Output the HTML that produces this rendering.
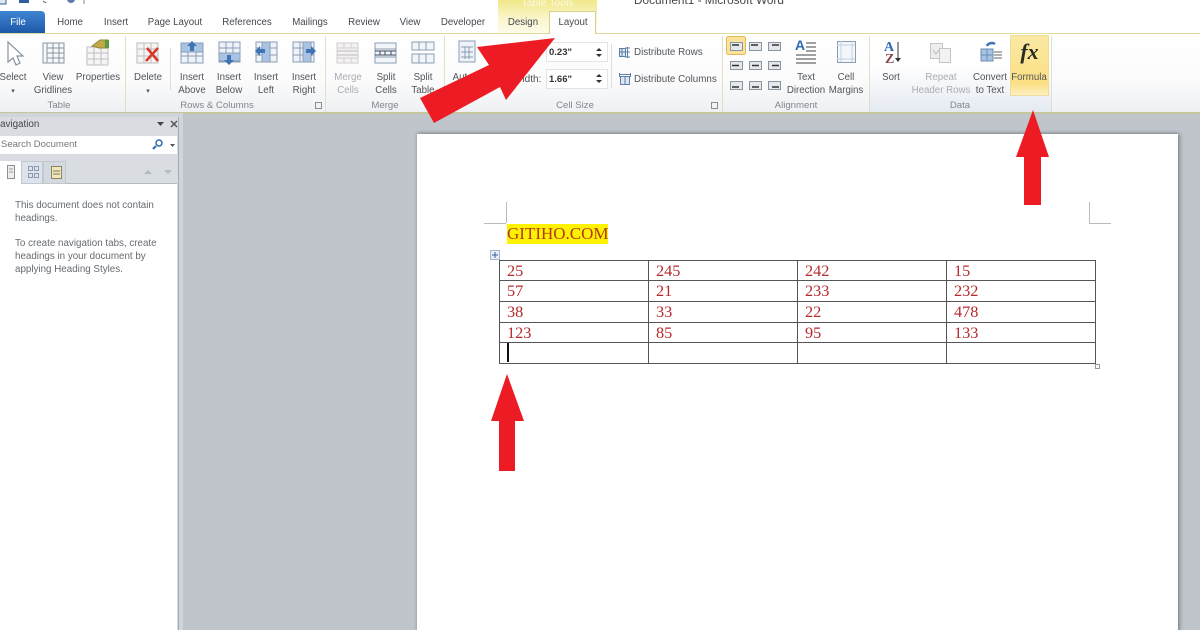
<!DOCTYPE html>
<html><head><meta charset="utf-8"><style>
html,body{margin:0;padding:0;width:1200px;height:630px;overflow:hidden;background:#c0c5cb}
body{font-family:"Liberation Sans",sans-serif}
#w{position:relative;width:1200px;height:630px;overflow:hidden;filter:blur(.35px)}
.a{position:absolute}
.t{position:absolute;font-size:9.7px;line-height:13px;color:#50555b;text-align:center;white-space:nowrap;transform:translateX(-50%)}
.g{color:#a8acb2}
.tab{position:absolute;top:17px;font-size:9.7px;color:#44494f;white-space:nowrap;transform:translateX(-50%)}
.lab{position:absolute;top:100px;font-size:9.6px;color:#82878d;white-space:nowrap;transform:translateX(-50%)}
.sep{position:absolute;top:36px;width:1px;height:76px;background:#dfe0c8}
.n{position:absolute;font-family:"Liberation Serif",serif;font-size:16.3px;color:#b52a2e;line-height:18px}
.l{position:absolute;background:#555}
.nv{position:absolute;font-size:9.8px;color:#666b70;white-space:nowrap}
</style></head><body><div id="w">
<!-- top -->
<div class="a" style="left:0;top:0;width:1200px;height:34px;background:#fff"></div>
<svg class="a" style="left:0;top:0" width="100" height="8"><rect x="-3" y="-6" width="9" height="10" fill="#dde6f2" stroke="#3a5f95"/><rect x="19" y="-4" width="10" height="7" fill="#2d5d9e"/><path d="M43 1l3 2" stroke="#557"/><circle cx="71" cy="-1" r="4" fill="#5a7bb0"/><path d="M84 -2v6" stroke="#888"/></svg>
<div class="a" style="left:0;top:11px;width:45px;height:22px;background:linear-gradient(#3f86d2,#1d58a8);border-radius:0 4px 0 0"></div>
<div class="a" style="left:0;top:17px;width:36px;text-align:center;font-size:9.7px;color:#fff">File</div>
<div class="tab" style="left:70px">Home</div>
<div class="tab" style="left:116px">Insert</div>
<div class="tab" style="left:175px">Page Layout</div>
<div class="tab" style="left:247px">References</div>
<div class="tab" style="left:310px">Mailings</div>
<div class="tab" style="left:364px">Review</div>
<div class="tab" style="left:410px">View</div>
<div class="tab" style="left:463px">Developer</div>
<div class="a" style="left:498px;top:0;width:99px;height:33px;background:linear-gradient(#f1e88a,#faf6cf 60%,#fdfbe8)"></div>
<div class="a" style="left:498px;top:-3px;width:99px;text-align:center;font-size:10.5px;color:#fbf9e6">Table Tools</div>
<div class="tab" style="left:523px">Design</div>
<div class="a" style="left:549px;top:11px;width:47px;height:23px;background:#fff;border:1px solid #d5d28c;border-bottom:none;box-sizing:border-box"></div>
<div class="tab" style="left:573px">Layout</div>
<div class="a" style="left:634px;top:-7px;font-size:11.8px;color:#44484d;white-space:nowrap">Document1 - Microsoft Word</div>
<div class="a" style="left:0;top:33px;width:549px;height:1px;background:#dedca0"></div>
<div class="a" style="left:596px;top:33px;width:604px;height:1px;background:#dedca0"></div>
<!-- ribbon -->
<div class="a" style="left:0;top:34px;width:1200px;height:78px;background:linear-gradient(#fff,#fbfbfb 60%,#eef0f3)"></div>
<div class="a" style="left:870px;top:34px;width:181px;height:78px;background:linear-gradient(#fff 40%,#e5eaf2)"></div>
<div class="a" style="left:0;top:112px;width:1200px;height:1.5px;background:#c6c69c"></div>
<div class="sep" style="left:125px"></div><div class="sep" style="left:325px"></div><div class="sep" style="left:444px"></div><div class="sep" style="left:722px"></div><div class="sep" style="left:869px"></div><div class="sep" style="left:1051px"></div>
<div class="a" style="left:170px;top:48px;width:1px;height:42px;background:#ddd"></div>
<div class="a" style="left:611px;top:44px;width:1px;height:44px;background:#ddd"></div>

<svg class="a" style="left:0;top:34px" width="1200" height="60" fill="none" stroke-width="1">
<!-- select -->
<path d="M8 8v20l5-4 3 7 4-2-3-7h6z" fill="#fff" stroke="#8a94a0" stroke-width="1.2"/>
<!-- gridlines -->
<g stroke="#8a95a0"><rect x="43" y="9" width="21" height="20" fill="#f6f8fa"/><path d="M47 14h17M47 19h17M47 24h17M47 9v20M53 9v20M59 9v20"/></g>
<!-- properties -->
<g stroke="#bcc1c8"><rect x="87" y="13" width="21" height="18" fill="#f8f4f2"/><path d="M87 19h21M87 25h21M94 13v18M101 13v18"/></g><path d="M92 12l8-6h8v8h-9z" fill="#c2a844" stroke="#8f8a3a"/><rect x="105" y="6" width="4" height="8" fill="#5f9a40"/>
<!-- delete -->
<g stroke="#bcbcbe"><rect x="137" y="9" width="21" height="20" fill="#f7f3f1"/><path d="M137 15h21M137 22h21M144 9v20M151 9v20"/></g><path d="M147 14l11 13M158 14l-12 13" stroke="#d8392c" stroke-width="2.6"/>
<!-- insert -->
<g stroke="#8a9db3"><rect x="181" y="9" width="22" height="20" fill="#eef3f9"/><path d="M181 15h22M181 22h22M188 9v20M196 9v20"/><rect x="181" y="9" width="22" height="9" fill="#a9c3e4"/></g><path d="M192 7l5 5h-3v5h-4v-5h-3z" fill="#3f74b5"/>
<g stroke="#8a9db3"><rect x="219" y="8" width="21" height="20" fill="#eef3f9"/><path d="M219 14h21M219 21h21M226 8v20M233 8v20"/><rect x="219" y="19" width="21" height="8" fill="#a9c3e4"/></g><path d="M229 31l5-5h-3v-5h-4v5h-3z" fill="#3f74b5"/>
<g stroke="#8a9db3"><rect x="256" y="8" width="21" height="20" fill="#eef3f9"/><path d="M256 14h21M256 21h21M263 8v20M270 8v20"/><rect x="262" y="8" width="8" height="20" fill="#a9c3e4"/></g><path d="M255 17l5-5v3h5v4h-5v3z" fill="#3f74b5"/>
<g stroke="#8a9db3"><rect x="293" y="8" width="21" height="20" fill="#eef3f9"/><path d="M293 14h21M293 21h21M300 8v20M307 8v20"/><rect x="303" y="8" width="8" height="20" fill="#a9c3e4"/></g><path d="M316 17l-5-5v3h-5v4h5v3z" fill="#3f74b5"/>
<!-- merge -->
<g stroke="#cfcfd2"><rect x="337" y="9" width="21" height="20" fill="#f5f1f1"/><path d="M337 14h21M337 24h21M344 9v5M351 9v5M344 24v5M351 24v5"/></g><path d="M337 17h21M337 21h21" stroke="#bbb"/>
<!-- split cells -->
<g stroke="#8a9db3"><rect x="375" y="9" width="21" height="20" fill="#f2f6fa"/><path d="M375 15h21M375 23h21"/></g><path d="M375 17h21M375 21h21M380 17v4M385 17v4M391 17v4" stroke="#3d4b5c"/>
<!-- split table -->
<g stroke="#8a9db3"><rect x="412" y="8" width="22" height="8" fill="#f2f6fa"/><rect x="412" y="20" width="22" height="9" fill="#f2f6fa"/><path d="M419 8v8M426 8v8M419 20v9M426 20v9"/></g>
<!-- autofit -->
<g stroke="#8a9db3"><rect x="459" y="7" width="16" height="21" fill="#eef3f9"/><path d="M461 13h12M461 18h12M461 23h12M465 13v12M469 13v12"/></g>
</svg>

<svg class="a" style="left:0;top:0" width="1200" height="112" fill="none">
<!-- dist -->
<g stroke="#5d7ea6"><rect x="619.500" y="48.500" width="6" height="8" fill="#dbe6f2"/><path d="M622 48v8M619 52h6M627.500 47v11M625 48h5M625 52h5M625 57h5"/><rect x="620.500" y="76.500" width="9" height="8" fill="#dbe6f2"/><path d="M619 74.500h12M619.500 73v4M630.500 73v4M625 76v9"/></g>
<!-- align highlight -->
<rect x="726.500" y="36.500" width="19" height="18" rx="2" fill="#fbe39a" stroke="#dfb85a"/>
<g fill="#e4e8ec" stroke="#8a95a0">
<rect x="730.500" y="42.500" width="12" height="8"/><rect x="749.500" y="42.500" width="12" height="8"/><rect x="768.500" y="42.500" width="12" height="8"/>
<rect x="730.500" y="61.500" width="12" height="8"/><rect x="749.500" y="61.500" width="12" height="8"/><rect x="768.500" y="61.500" width="12" height="8"/>
<rect x="730.500" y="81.500" width="12" height="8"/><rect x="749.500" y="81.500" width="12" height="8"/><rect x="768.500" y="81.500" width="12" height="8"/>
</g>
<path d="M732 45h7M751 45h7M772 45h7M732 65.500h7M752 65.500h7M772 65.500h7M732 87h7M752 87h7M772 87h7" stroke="#333" stroke-width="1.5"/>
<!-- text direction -->
<text x="795" y="50" font-family="Liberation Sans" font-weight="bold" font-size="14" fill="#2d6ab0">A</text>
<path d="M806 43h10M806 47h10M806 51h10M796 55h20M796 59h20M796 63h20" stroke="#444"/>
<!-- margins -->
<rect x="837.500" y="41.500" width="18" height="21" fill="#f3f6fa" stroke="#8a9db3"/><path d="M841 41v21M852 41v21M837 45h18M837 59h18" stroke="#c5d0dd"/>
<!-- sort -->
<text x="884" y="51" font-family="Liberation Serif" font-weight="bold" font-size="14" fill="#2d6ab0">A</text>
<text x="885" y="63" font-family="Liberation Serif" font-weight="bold" font-size="14" fill="#8b4a4a">Z</text>
<path d="M898 42v18" stroke="#333"/><path d="M895 58h6l-3 4z" fill="#333"/>
<!-- repeat -->
<rect x="930.500" y="43.500" width="12" height="15" fill="#eee" stroke="#c5c5c5"/><rect x="939.500" y="48.500" width="11" height="14" fill="#f2f2f2" stroke="#c5c5c5"/><path d="M933 50l3 4 3-4" stroke="#bbb"/>
<!-- convert -->
<rect x="981" y="49" width="12" height="12" fill="#a8c3e2" stroke="#6b8cb3"/><path d="M987 49v12M981 55h12" stroke="#6b8cb3"/><path d="M994 52h8M994 55h8M994 58h8" stroke="#666"/><path d="M987 46a5 4 0 0 1 8-2" stroke="#3f74b5" stroke-width="2.5"/>
</svg>

<!-- formula button -->
<div class="a" style="left:1010px;top:35px;width:39px;height:61px;background:linear-gradient(#fbe9a4,#fbdf83 80%,#fdf0c0);border:1px solid #eedc9c;box-sizing:border-box"></div>
<div class="a" style="left:1010px;top:39px;width:39px;text-align:center;font-family:'Liberation Serif',serif;font-style:italic;font-weight:bold;font-size:22px;color:#2b2b22">fx</div>

<!-- field boxes -->
<div class="a" style="left:546px;top:42px;width:62px;height:20px;background:#fff;border:1px solid #e2e4e8;box-sizing:border-box"></div>
<div class="a" style="left:546px;top:69px;width:62px;height:20px;background:#fff;border:1px solid #e2e4e8;box-sizing:border-box"></div>
<svg class="a" style="left:590px;top:44px" width="20" height="44"><path d="M6 7l3-3 3 3zM6 10l3 3 3-3zM6 33l3-3 3 3zM6 36l3 3 3-3z" fill="#333"/></svg>
<div class="a" style="left:549px;top:47px;font-size:9.5px;font-weight:bold;color:#333">0.23"</div>
<div class="a" style="left:549px;top:74px;font-size:9.5px;font-weight:bold;color:#333">1.66"</div>
<div class="a" style="left:513px;top:74px;font-size:10px;color:#4a4f55">Width:</div>
<div class="a" style="left:634px;top:47px;font-size:9.8px;color:#50555b;white-space:nowrap">Distribute Rows</div>
<div class="a" style="left:634px;top:74px;font-size:9.8px;color:#50555b;white-space:nowrap">Distribute Columns</div>

<!-- button labels -->
<div class="t" style="left:13px;top:71px">Select<br><span style="font-size:7px">▾</span></div>
<div class="t" style="left:53px;top:71px">View<br>Gridlines</div>
<div class="t" style="left:98px;top:71px">Properties</div>
<div class="t" style="left:148px;top:71px">Delete<br><span style="font-size:7px">▾</span></div>
<div class="t" style="left:192px;top:71px">Insert<br>Above</div>
<div class="t" style="left:229px;top:71px">Insert<br>Below</div>
<div class="t" style="left:266px;top:71px">Insert<br>Left</div>
<div class="t" style="left:304px;top:71px">Insert<br>Right</div>
<div class="t g" style="left:348px;top:71px">Merge<br>Cells</div>
<div class="t" style="left:386px;top:71px">Split<br>Cells</div>
<div class="t" style="left:423px;top:71px">Split<br>Table</div>
<div class="t" style="left:468px;top:71px">AutoFit</div>
<div class="t" style="left:806px;top:71px">Text<br>Direction</div>
<div class="t" style="left:846px;top:71px">Cell<br>Margins</div>
<div class="t" style="left:891px;top:71px">Sort</div>
<div class="t g" style="left:941px;top:71px">Repeat<br>Header Rows</div>
<div class="t" style="left:990px;top:71px">Convert<br>to Text</div>
<div class="t" style="left:1029px;top:71px">Formula</div>
<div class="lab" style="left:59px">Table</div>
<div class="lab" style="left:217px">Rows &amp; Columns</div>
<div class="lab" style="left:385px">Merge</div>
<div class="lab" style="left:575px">Cell Size</div>
<div class="lab" style="left:796px">Alignment</div>
<div class="lab" style="left:960px">Data</div>
<svg class="a" style="left:0;top:0" width="730" height="112" fill="none" stroke="#8a8f95"><path d="M315.500 102.500h6v6h-6zM711.500 102.500h6v6h-6z"/></svg>

<!-- nav pane -->
<div class="a" style="left:0;top:113px;width:183px;height:517px;background:#d0d5db"></div>
<div class="a" style="left:0;top:117px;width:178px;height:513px;background:#d9dde2;border-right:1px solid #a5abb2"></div>
<div class="nv" style="left:-7px;top:119px;color:#444">Navigation</div>
<svg class="a" style="left:155px;top:119px" width="25" height="10"><path d="M2 3h7l-3.5 4z" fill="#444"/><path d="M16 2l6 6M22 2l-6 6" stroke="#555" stroke-width="1.5"/></svg>
<div class="a" style="left:0;top:136px;width:177px;height:18px;background:#fff"></div>
<div class="nv" style="left:1px;top:139px;color:#777;font-size:9.5px">Search Document</div>
<svg class="a" style="left:150px;top:138px" width="28" height="14" fill="none"><circle cx="9" cy="5" r="3" stroke="#2d6ab0" stroke-width="1.5"/><path d="M6 8l-3 3" stroke="#2d6ab0" stroke-width="2"/><path d="M20 6h5l-2.5 3z" fill="#555"/></svg>
<div class="a" style="left:0;top:183px;width:177px;height:447px;background:#fff"></div>
<div class="a" style="left:0;top:183px;width:177px;height:1px;background:#b5bac0"></div>
<div class="a" style="left:21px;top:161px;width:22px;height:23px;background:#dde3ec;border:1px solid #c3c8cf;box-sizing:border-box"></div>
<div class="a" style="left:43px;top:161px;width:23px;height:23px;background:#d4d9df;border:1px solid #c3c8cf;box-sizing:border-box"></div>
<div class="a" style="left:0;top:161px;width:21px;height:24px;background:#fff"></div>
<svg class="a" style="left:0;top:163px" width="180" height="20" fill="none"><rect x="7.500" y="2.500" width="7" height="13" fill="#eee" stroke="#8b8f95"/><path d="M9 6h4M9 9h4" stroke="#999"/><path d="M28.500 3.500h4v4h-4zM34.500 3.500h4v4h-4zM28.500 10.500h4v4h-4zM34.500 10.500h4v4h-4z" stroke="#8a98ac"/><rect x="51.500" y="3.500" width="10" height="12" fill="#f2e6b8" stroke="#8a8460"/><path d="M53 8h7M53 11h7" stroke="#7a7a6a"/><path d="M144 11l4-4 4 4zM164 7l4 4 4-4z" fill="#b5bac0"/></svg>
<div class="nv" style="left:15px;top:199px;line-height:13px">This document does not contain<br>headings.</div>
<div class="nv" style="left:15px;top:237px;line-height:13px">To create navigation tabs, create<br>headings in your document by<br>applying Heading Styles.</div>

<!-- page -->
<div class="a" style="left:417px;top:134px;width:761px;height:510px;background:#fff;box-shadow:2px 0 4px rgba(90,95,105,.5),0 -1px 3px rgba(90,95,105,.4)"></div>
<div class="a" style="left:506px;top:202px;width:1px;height:21px;background:#bbb"></div>
<div class="a" style="left:484px;top:223px;width:22px;height:1px;background:#bbb"></div>
<div class="a" style="left:1089px;top:202px;width:1px;height:21px;background:#bbb"></div>
<div class="a" style="left:1089px;top:223px;width:22px;height:1px;background:#bbb"></div>
<div class="a" style="left:507px;top:224px;height:20px;width:101px;background:#fff200"></div>
<div class="a" style="left:507px;top:224px;font-family:'Liberation Serif',serif;font-size:17px;line-height:20px;color:#b33a14;white-space:nowrap">GITIHO.COM</div>
<svg class="a" style="left:490px;top:250px" width="10" height="10" fill="none"><rect x=".5" y=".5" width="9" height="9" fill="#e8eef6" stroke="#a5b5cc"/><path d="M5 2v6M2 5h6" stroke="#3a5f95"/></svg>
<!-- table -->
<div class="l" style="left:500px;top:260px;width:596px;height:1px"></div>
<div class="l" style="left:500px;top:280px;width:596px;height:1px"></div>
<div class="l" style="left:500px;top:301px;width:596px;height:1px"></div>
<div class="l" style="left:500px;top:322px;width:596px;height:1px"></div>
<div class="l" style="left:500px;top:342px;width:596px;height:1px"></div>
<div class="l" style="left:500px;top:363px;width:596px;height:1px"></div>
<div class="l" style="left:499px;top:260px;width:1px;height:104px"></div>
<div class="l" style="left:648px;top:260px;width:1px;height:104px"></div>
<div class="l" style="left:797px;top:260px;width:1px;height:104px"></div>
<div class="l" style="left:946px;top:260px;width:1px;height:104px"></div>
<div class="l" style="left:1095px;top:260px;width:1px;height:104px"></div>
<div class="a" style="left:1095px;top:364px;width:3px;height:3px;border:1px solid #999;background:#fff"></div>
<div class="a" style="left:507px;top:343px;width:1.5px;height:19px;background:#111"></div>
<div class="n" style="left:507px;top:262px">25</div><div class="n" style="left:656px;top:262px">245</div><div class="n" style="left:805px;top:262px">242</div><div class="n" style="left:954px;top:262px">15</div>
<div class="n" style="left:507px;top:282px">57</div><div class="n" style="left:656px;top:282px">21</div><div class="n" style="left:805px;top:282px">233</div><div class="n" style="left:954px;top:282px">232</div>
<div class="n" style="left:507px;top:303px">38</div><div class="n" style="left:656px;top:303px">33</div><div class="n" style="left:805px;top:303px">22</div><div class="n" style="left:954px;top:303px">478</div>
<div class="n" style="left:507px;top:324px">123</div><div class="n" style="left:656px;top:324px">85</div><div class="n" style="left:805px;top:324px">95</div><div class="n" style="left:954px;top:324px">133</div>
<!-- arrows -->
<svg class="a" style="left:0;top:0" width="1200" height="630"><g fill="#ed1c24"><polygon points="555,38 477,47 489,65 420,98 434,123 500,87 506,100"/><polygon points="1033,110 1016,157 1024,157 1024,205 1041,205 1041,157 1049,157"/><polygon points="507,374 491,421 499,421 499,471 515,471 515,421 524,421"/></g></svg>
</div></body></html>
